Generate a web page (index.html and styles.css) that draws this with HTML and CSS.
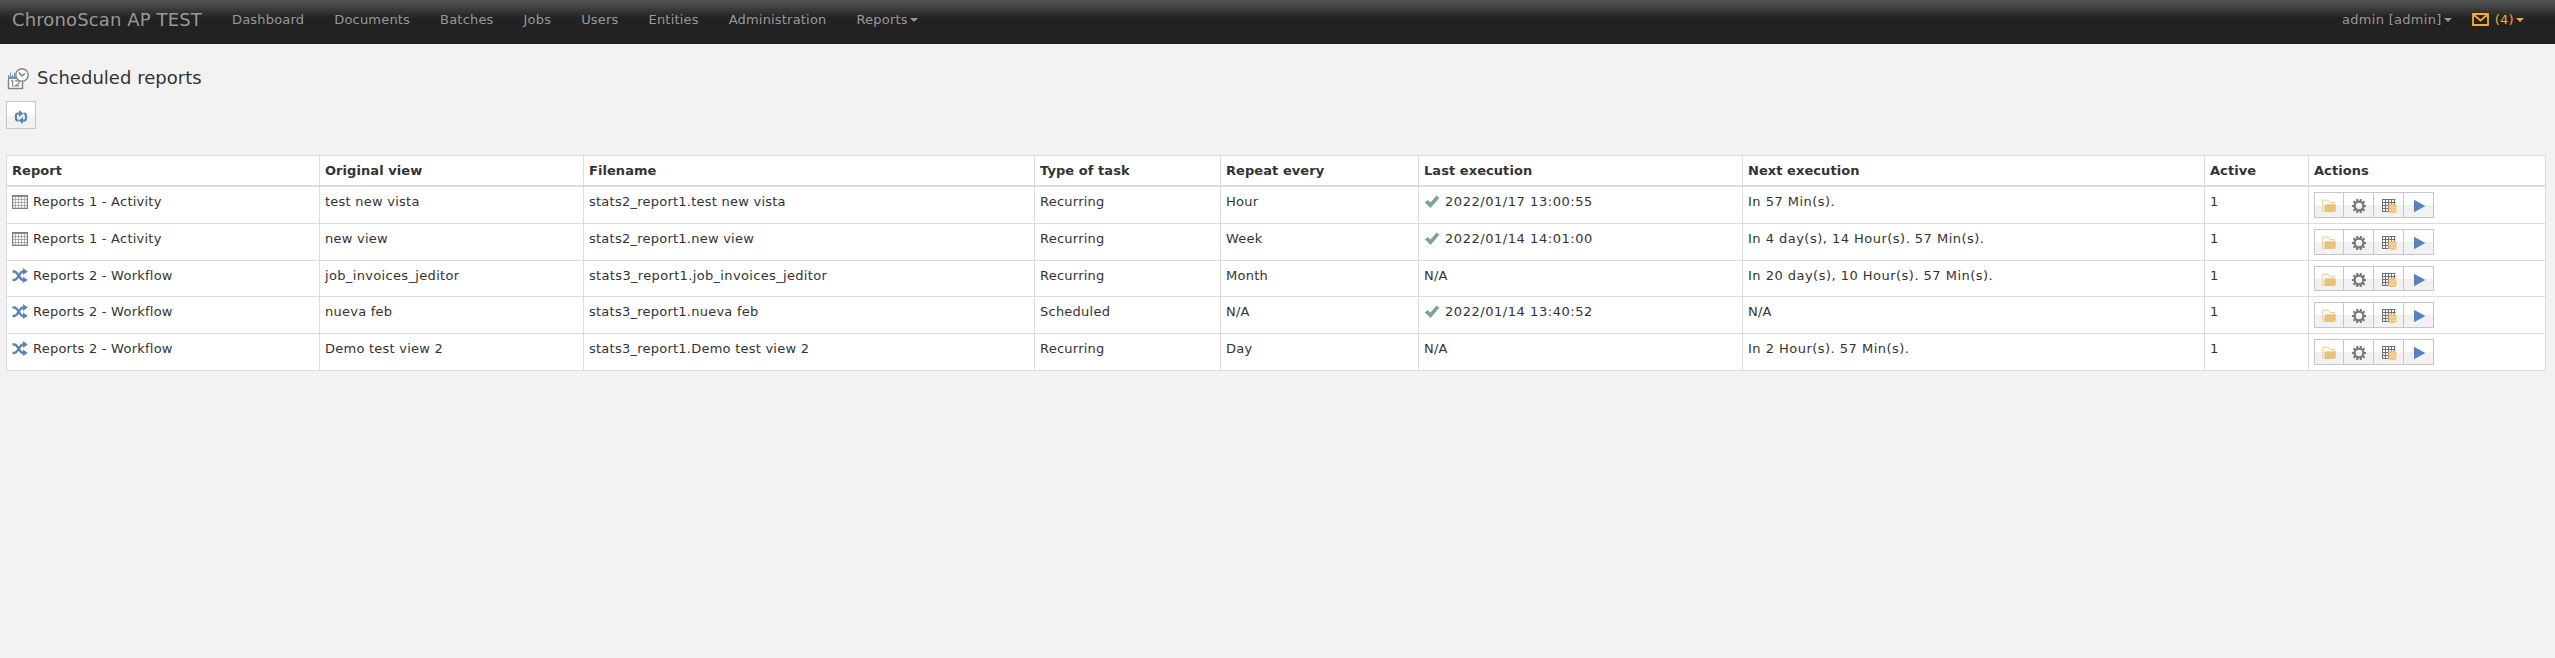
FILE: index.html
```
<!DOCTYPE html>
<html lang="en">
<head>
<meta charset="utf-8">
<title>Scheduled reports</title>
<link rel="stylesheet" href="styles.css">
</head>
<body>
<svg class="defs" width="0" height="0" aria-hidden="true">
  <symbol id="grid" viewBox="0 0 16 16"><path d="M.6 2.500h14.800v12.900H.6z" fill="#fff" stroke="#808080" stroke-width="1.200"/><path d="M0 3h16" stroke="#808080" stroke-width="1.800"/><path d="M1 6.500h14M1 9.500h14M1 12.500h14M3.500 4v11M6.500 4v11M9.500 4v11M12.500 4v11" stroke="#a5a5a5" stroke-width=".9"/></symbol>
  <symbol id="shuffle" viewBox="0 0 16 16"><path d="M.5 4.500h1.800C6 4.500 7.500 13 11 13h1.500M.5 13h1.800C6 13 7.500 4.500 11 4.500h1.500" fill="none" stroke="#5b82b5" stroke-width="2.400"/><path d="M11 1l4.700 3.500L11 8zM11 9.500l4.700 3.500L11 16z" fill="#5b82b5"/></symbol>
  <symbol id="check" viewBox="0 0 16 16"><path d="M.8 9.500L3.700 7l2.800 2.500L12.500 2.500l2.900 2.300L6.600 15z" fill="#7ca597"/></symbol>
  <symbol id="folder" viewBox="0 0 16 16"><path d="M3 13.500H1.800V2.200h5.200l2 2.500h4.500V6" fill="none" stroke="#e9c888" stroke-width="1"/><path d="M3.500 13.500V8q0-1.800 2-1.800h8.700q.6 0 .6.800v5q0 2-2 2H4.500q-1 0-1-.5z" fill="#e7c27c"/></symbol>
  <symbol id="gear" viewBox="0 0 16 16"><circle cx="8" cy="8" r="4.400" fill="none" stroke="#777" stroke-width="2.300"/><path d="M6.200 1v2M9.800 1v2M6.200 13v2M9.800 13v2M1 8h2M13 8h2M2.500 3.200l1.600 1.500M13.500 3.200l-1.600 1.500M2.500 12.800l1.600-1.500M13.500 12.800l-1.600-1.500" stroke="#777" stroke-width="2"/></symbol>
  <symbol id="gridlist" viewBox="0 0 16 16"><path d="M1.500 1v13M4.500 1v13M7.500 1v13M10.500 1v13M13.500 1v13M1 1.500h13.500M1 4.500h13.500M1 7.500h13.500M1 10.500h13.500M1 13.500h13.500" stroke="#707070" stroke-width="1"/><path d="M7.500 7q4-2.500 8 0v7q-4 2.500-8 0z" fill="#ecc67e"/><path d="M8.500 9.300h6M8.500 12.300h6" stroke="#f6dfb3" stroke-width=".8"/></symbol>
  <symbol id="play" viewBox="0 0 16 16"><path d="M3 1.800L14.300 8 3 14.200z" fill="#5782ba"/></symbol>
</svg>
<nav class="navbar">
  <a class="brand">ChronoScan AP TEST</a>
  <div class="menu">
    <a>Dashboard</a><a>Documents</a><a>Batches</a><a>Jobs</a><a>Users</a><a>Entities</a><a>Administration</a><a>Reports<i class="caret"></i></a>
  </div>
  <div class="account">
    <a>admin [admin]<i class="caret"></i></a>
    <a class="mail"><svg class="envelope" viewBox="0 0 17 13"><path d="M1 1h15v11H1zM1.500 1.500l7 6 7-6" fill="none" stroke="#f5a933" stroke-width="1.800"/></svg>(4)<i class="caret"></i></a>
  </div>
</nav>
<main class="page">
  <header class="title">
    <svg class="title-icon" viewBox="0 0 22 22"><path d="M1.500 11v9.500h14V14" fill="#fff" stroke="#858585" stroke-width="1.500"/><path d="M1 7h9v4H1z" fill="#6b93c0"/><path d="M3.500 4.500v4M7.500 4.500v4" stroke="#fff" stroke-width="2.600"/><path d="M3.500 4.500v4M7.500 4.500v4" stroke="#888" stroke-width="1"/><path d="M4 12.800h1.700v5.700M8 12.800h4v2.500l-3.700 2.500h4" fill="none" stroke="#858585" stroke-width="1.200"/><circle cx="15" cy="7" r="6.200" fill="#fff" stroke="#858585" stroke-width="1.400"/><path d="M12 4.500l3 3.500 3-2.500" fill="none" stroke="#5b82b5" stroke-width="1.500"/></svg>
    <h1>Scheduled reports</h1>
  </header>
  <button class="refresh"><svg viewBox="0 0 14 14"><path d="M4.500 10.500H4Q2 10.500 2 8.500V5.500Q2 3.500 4 3.500H6M9.500 3.500H10q2 0 2 2v3q0 2-2 2H8" fill="none" stroke="#5b82b5" stroke-width="2.200"/><path d="M5 0l4.300 3.500L5 7zM9 7l-4.300 3.500L9 14z" fill="#5b82b5"/></svg></button>
  <table class="reports">
    <colgroup><col class="c1"><col class="c2"><col class="c3"><col class="c4"><col class="c5"><col class="c6"><col class="c7"><col class="c8"><col class="c9"></colgroup>
    <thead><tr><th>Report</th><th>Original view</th><th>Filename</th><th>Type of task</th><th>Repeat every</th><th>Last execution</th><th>Next execution</th><th>Active</th><th>Actions</th></tr></thead>
    <tbody>
      <tr><td><svg class="ico"><use href="#grid"/></svg>Reports 1 - Activity</td><td>test new vista</td><td>stats2_report1.test new vista</td><td>Recurring</td><td>Hour</td><td class="date"><svg class="ico"><use href="#check"/></svg>2022/01/17 13:00:55</td><td class="next">In 57 Min(s).</td><td>1</td><td><div class="actions"><button><svg><use href="#folder"/></svg></button><button><svg><use href="#gear"/></svg></button><button><svg><use href="#gridlist"/></svg></button><button><svg><use href="#play"/></svg></button></div></td></tr>
      <tr><td><svg class="ico"><use href="#grid"/></svg>Reports 1 - Activity</td><td>new view</td><td>stats2_report1.new view</td><td>Recurring</td><td>Week</td><td class="date"><svg class="ico"><use href="#check"/></svg>2022/01/14 14:01:00</td><td class="next">In 4 day(s), 14 Hour(s). 57 Min(s).</td><td>1</td><td><div class="actions"><button><svg><use href="#folder"/></svg></button><button><svg><use href="#gear"/></svg></button><button><svg><use href="#gridlist"/></svg></button><button><svg><use href="#play"/></svg></button></div></td></tr>
      <tr class="short"><td><svg class="ico"><use href="#shuffle"/></svg>Reports 2 - Workflow</td><td class="wide">job_invoices_jeditor</td><td class="wide">stats3_report1.job_invoices_jeditor</td><td>Recurring</td><td>Month</td><td>N/A</td><td class="next">In 20 day(s), 10 Hour(s). 57 Min(s).</td><td>1</td><td><div class="actions"><button><svg><use href="#folder"/></svg></button><button><svg><use href="#gear"/></svg></button><button><svg><use href="#gridlist"/></svg></button><button><svg><use href="#play"/></svg></button></div></td></tr>
      <tr><td><svg class="ico"><use href="#shuffle"/></svg>Reports 2 - Workflow</td><td>nueva feb</td><td>stats3_report1.nueva feb</td><td>Scheduled</td><td>N/A</td><td class="date"><svg class="ico"><use href="#check"/></svg>2022/01/14 13:40:52</td><td>N/A</td><td>1</td><td><div class="actions"><button><svg><use href="#folder"/></svg></button><button><svg><use href="#gear"/></svg></button><button><svg><use href="#gridlist"/></svg></button><button><svg><use href="#play"/></svg></button></div></td></tr>
      <tr><td><svg class="ico"><use href="#shuffle"/></svg>Reports 2 - Workflow</td><td>Demo test view 2</td><td>stats3_report1.Demo test view 2</td><td>Recurring</td><td>Day</td><td>N/A</td><td class="next">In 2 Hour(s). 57 Min(s).</td><td>1</td><td><div class="actions"><button><svg><use href="#folder"/></svg></button><button><svg><use href="#gear"/></svg></button><button><svg><use href="#gridlist"/></svg></button><button><svg><use href="#play"/></svg></button></div></td></tr>
    </tbody>
  </table>
</main>
</body>
</html>
```
FILE: styles.css
```
* { box-sizing: border-box; }
body { margin: 0; background: #f2f2f2; color: #333; font: 13px/18px Verdana, "DejaVu Sans", sans-serif; }
.defs { display: block; height: 0; }
.navbar { display: flex; height: 44px; padding: 10px 31px 0 12px; color: #999; line-height: 20px; letter-spacing: .19px; background: linear-gradient(#555 0, #222 18px, #222 100%); }
.brand { width: 220px; font-size: 18px; letter-spacing: .13px; white-space: nowrap; }
.menu { display: flex; gap: 30px; }
.caret { display: inline-block; border: 4px solid transparent; border-top-color: currentColor; border-bottom: 0; margin-left: 2px; vertical-align: 2px; }
.account { display: flex; gap: 20px; margin-left: auto; letter-spacing: .3px; }
.mail { color: #f5a933; }
.envelope { width: 17px; height: 13px; margin-right: 6px; vertical-align: -2px; }
.page { padding: 24px 9px 0 6px; }
.title { display: flex; gap: 8px; height: 33px; padding-left: 1px; }
.title-icon { width: 22px; height: 22px; }
.title h1 { margin: -1px 0 0; font-size: 18px; line-height: 22px; font-weight: 400; letter-spacing: .03px; }
button { display: flex; align-items: center; justify-content: center; padding: 0; border: 1px solid #c6c6c6; background: linear-gradient(#fff 0, #fff 50%, #f1f1f1 51%, #f2f2f2 100%); }
.refresh { width: 30px; height: 28px; margin-bottom: 26px; padding-top: 3px; }
.refresh svg { width: 14px; height: 14px; }
.reports { width: 2540px; table-layout: fixed; border-collapse: separate; border-spacing: 0; background: #fff; border: solid #ddd; border-width: 1px 0 0 1px; }
.c1 { width: 313px; }
.c2 { width: 264px; }
.c3 { width: 451px; }
.c4 { width: 186px; }
.c5 { width: 198px; }
.c6 { width: 324px; }
.c7 { width: 462px; }
.c8 { width: 104px; }
.c9 { width: 237px; }
th, td { padding: 5px 5px 0; text-align: left; vertical-align: top; border: solid #ddd; border-width: 0 1px 1px 0; white-space: nowrap; }
th { height: 31px; padding-top: 6px; border-bottom-width: 2px; letter-spacing: .06px; }
td { height: 37px; padding-top: 6px; letter-spacing: .24px; }
.short td { height: 36px; }
.ico { width: 16px; height: 16px; margin-right: 5px; vertical-align: -3px; }
.actions { display: flex; height: 26px; margin-top: -1px; }
.short .actions { height: 25px; }
.actions button { width: 30px; height: 100%; padding-top: 2px; }
.actions button + button { border-left: 0; }
.actions svg { width: 16px; height: 16px; }
td.wide { letter-spacing: .34px; }
td.date { letter-spacing: .55px; }
td.next { letter-spacing: .48px; }
```
